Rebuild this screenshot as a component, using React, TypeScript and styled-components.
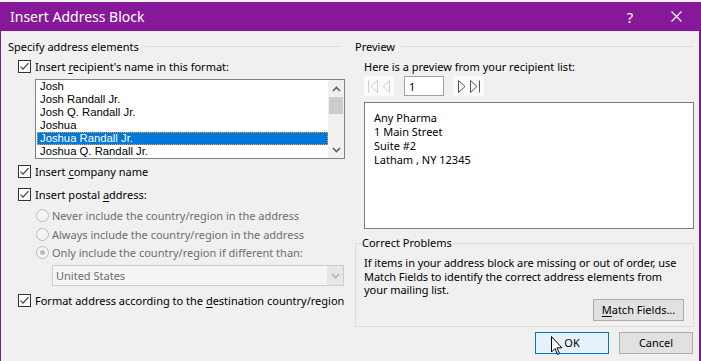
import React from "react";
import styled, { createGlobalStyle } from "styled-components";

const UI_FONT = `"Noto Sans", "Liberation Sans", sans-serif`;
const LIST_FONT = `"Liberation Sans", "Noto Sans", sans-serif`;
const PURPLE = "#87189a";

const names = [
  "Josh",
  "Josh Randall Jr.",
  "Josh Q. Randall Jr.",
  "Joshua",
  "Joshua Randall Jr.",
  "Joshua Q. Randall Jr.",
];

const address = ["Any Pharma", "1 Main Street", "Suite #2", "Latham , NY 12345"];

const GlobalStyle = createGlobalStyle`
  html, body {
    margin: 0;
    padding: 0;
    background: #f4f4f4;
  }
  body {
    font-family: ${UI_FONT};
    font-size: 11px;
    color: #000;
  }
`;

const Window = styled.div`
  position: relative;
  margin-top: 2px;
  width: 701px;
  height: 359px;
  box-sizing: border-box;
  border-left: 1px solid ${PURPLE};
  border-right: 2px solid ${PURPLE};
  background: #f0f0f0;
  display: flex;
  flex-direction: column;
  overflow: hidden;
`;

const TitleBar = styled.div`
  height: 29px;
  flex-shrink: 0;
  background: ${PURPLE};
  color: #fff;
  display: flex;
  align-items: center;
  padding-left: 9px;
  font-size: 14px;
`;

const Title = styled.div`
  flex: 1;
`;

const TitleButton = styled.div<{ $w: number }>`
  width: ${(p) => p.$w}px;
  height: 29px;
  display: flex;
  align-items: center;
  justify-content: center;
  font-size: 15px;
`;

const Body = styled.div`
  display: grid;
  grid-template-columns: 337px 339px;
  column-gap: 10px;
  padding: 7px 0 0 7px;
`;

const Column = styled.div`
  display: flex;
  flex-direction: column;
`;

const Heading = styled.div<{ $lineEnd?: number }>`
  height: 16px;
  display: flex;
  align-items: center;
  gap: 6px;
  margin-right: ${(p) => p.$lineEnd ?? 0}px;
  &::after {
    content: "";
    flex: 1;
    height: 1px;
    background: #dcdcdc;
  }
`;

const CheckRow = styled.div<{ $top: number }>`
  height: 16px;
  margin-top: ${(p) => p.$top}px;
  padding-left: 10px;
  display: flex;
  align-items: center;
  gap: 4px;
  white-space: nowrap;
`;

const Key = styled.span`
  text-decoration: underline;
  text-underline-offset: 2px;
`;

const ListBox = styled.div`
  margin: 5px 0 0 27px;
  width: 310px;
  height: 80px;
  box-sizing: border-box;
  border: 1px solid #828282;
  background: #fff;
  display: flex;
  overflow: hidden;
`;

const Items = styled.div`
  flex: 1;
  overflow: hidden;
  font-family: ${LIST_FONT};
  font-size: 11.3px;
`;

const Item = styled.div<{ $selected?: boolean }>`
  height: 13px;
  line-height: 13px;
  margin-left: 1px;
  padding-left: 3px;
  white-space: nowrap;
  background: ${(p) => (p.$selected ? "#0078d7" : "transparent")};
  color: ${(p) => (p.$selected ? "#fff" : "#000")};
  outline: ${(p) => (p.$selected ? "1px dotted #f0a050" : "none")};
  outline-offset: -1px;
`;

const ScrollBar = styled.div`
  width: 16px;
  background: #f0f0f0;
  display: flex;
  flex-direction: column;
`;

const ScrollArrow = styled.div`
  height: 17px;
  display: flex;
  align-items: center;
  justify-content: center;
`;

const Thumb = styled.div`
  height: 17px;
  margin: 0 1px;
  background: #cdcdcd;
`;

const ScrollTrack = styled.div`
  flex: 1;
`;

const RadioRow = styled.div<{ $top: number }>`
  height: 16px;
  margin-top: ${(p) => p.$top}px;
  padding-left: 28px;
  display: flex;
  align-items: center;
  gap: 3px;
  color: #6d6d6d;
  white-space: nowrap;
`;

const RadioCircle = styled.span<{ $on?: boolean }>`
  width: 13px;
  height: 13px;
  box-sizing: border-box;
  border-radius: 50%;
  border: 1px solid #bcbcbc;
  background: #f4f4f4;
  display: flex;
  align-items: center;
  justify-content: center;
  &::after {
    content: "";
    width: 5px;
    height: 5px;
    border-radius: 50%;
    background: ${(p) => (p.$on ? "#bcbcbc" : "transparent")};
  }
`;

const Select = styled.div`
  margin: 5px 0 0 44px;
  width: 292px;
  height: 21px;
  box-sizing: border-box;
  border: 1px solid #cccccc;
  background: #f5f5f5;
  display: flex;
  align-items: center;
  color: #6d6d6d;
`;

const SelectText = styled.div`
  flex: 1;
  padding-left: 3px;
`;

const SelectArrow = styled.div`
  width: 16px;
  height: 100%;
  background: #e6e6e6;
  display: flex;
  align-items: center;
  justify-content: center;
`;

const Hint = styled.div`
  height: 16px;
  margin-top: 4px;
  padding-left: 9px;
  display: flex;
  align-items: center;
`;

const NavRow = styled.div`
  margin-top: 2px;
  padding-left: 9px;
  height: 20px;
  display: flex;
`;

const NavButtons = styled.div<{ $w: number; $gap: number }>`
  width: ${(p) => p.$w}px;
  margin-left: ${(p) => p.$gap}px;
  height: 20px;
  background: #fbfbfb;
  display: flex;
  align-items: center;
  justify-content: center;
  gap: 4px;
`;

const RecordInput = styled.div`
  width: 40px;
  height: 20px;
  margin-left: 10px;
  box-sizing: border-box;
  border: 1px solid #a0a0a0;
  background: #fff;
  padding-left: 4px;
  display: flex;
  align-items: center;
`;

const PreviewBox = styled.div`
  margin: 6px 0 0 9px;
  height: 127px;
  box-sizing: border-box;
  border: 1px solid #7a7a7a;
  background: #fff;
  padding: 8px 9px;
  line-height: 14px;
`;

const Group = styled.fieldset`
  margin: 6px 0 0 0;
  padding: 5px 9px 5px 8px;
  min-width: 0;
  border: 1px solid #dcdcdc;
  display: flex;
  flex-direction: column;
`;

const Legend = styled.legend`
  padding: 0 1px;
  margin-left: -3px;
  height: 16px;
  line-height: 16px;
`;

const GroupText = styled.div`
  line-height: 13.5px;
  margin-right: -3px;
  letter-spacing: -0.05px;
`;

const Button = styled.div<{ $w: number; $primary?: boolean }>`
  width: ${(p) => p.$w}px;
  height: 22px;
  box-sizing: border-box;
  border: 1px solid ${(p) => (p.$primary ? "#0078d7" : "#adadad")};
  background: ${(p) => (p.$primary ? "#e5f1fb" : "#e1e1e1")};
  display: flex;
  align-items: center;
  justify-content: center;
  white-space: nowrap;
`;

const GroupActions = styled.div`
  margin-top: 2px;
  display: flex;
  justify-content: flex-end;
`;

const DialogActions = styled.div`
  position: relative;
  margin-top: 5px;
  padding-right: 1px;
  display: flex;
  justify-content: flex-end;
  gap: 10px;
`;

const Pointer = styled.svg`
  position: absolute;
  left: 196px;
  top: 4px;
`;

const CheckBox: React.FC = () => (
  <svg width="13" height="13" viewBox="0 0 13 13">
    <rect x="0.5" y="0.5" width="12" height="12" fill="#fff" stroke="#333" />
    <path d="M2.5 6.5 L5 9.2 L10.5 3.2" fill="none" stroke="#333" strokeWidth="1.1" />
  </svg>
);

const Chevron: React.FC<{ up?: boolean; color?: string }> = ({ up, color = "#606060" }) => (
  <svg width="9" height="6" viewBox="0 0 9 6">
    <path
      d={up ? "M1 5 L4.5 1.5 L8 5" : "M1 1 L4.5 4.5 L8 1"}
      fill="none"
      stroke={color}
      strokeWidth="1.6"
    />
  </svg>
);

const NavIcon: React.FC<{ dir: "left" | "right"; bar?: boolean; color: string }> = ({
  dir,
  bar,
  color,
}) => (
  <svg width={bar ? 10 : 8} height="13" viewBox={bar ? "0 0 10 13" : "0 0 8 13"}>
    {dir === "left" ? (
      <>
        {bar && <path d="M0.5 0.5 V12.5" stroke={color} />}
        <path
          d={bar ? "M9.5 0.5 L3 6.5 L9.5 12.5 Z" : "M7.5 0.5 L1 6.5 L7.5 12.5 Z"}
          fill="none"
          stroke={color}
        />
      </>
    ) : (
      <>
        <path d="M0.5 0.5 L7 6.5 L0.5 12.5 Z" fill="none" stroke={color} />
        {bar && <path d="M9.5 0.5 V12.5" stroke={color} />}
      </>
    )}
  </svg>
);

const App: React.FC = () => {
  return (
    <>
      <GlobalStyle />
      <Window>
        <TitleBar>
          <Title>Insert Address Block</Title>
          <TitleButton $w={46}>?</TitleButton>
          <TitleButton $w={46}>
            <svg width="11" height="11" viewBox="0 0 11 11">
              <path d="M0.5 0.5 L10.5 10.5 M10.5 0.5 L0.5 10.5" stroke="#fff" strokeWidth="1.2" />
            </svg>
          </TitleButton>
        </TitleBar>

        <Body>
          <Column>
            <Heading $lineEnd={4}>Specify address elements</Heading>
            <CheckRow $top={4}>
              <CheckBox />
              <span>
                Insert <Key>r</Key>ecipient's name in this format:
              </span>
            </CheckRow>
            <ListBox>
              <Items>
                {names.map((n, i) => (
                  <Item key={n} $selected={i === 4}>
                    {n}
                  </Item>
                ))}
              </Items>
              <ScrollBar>
                <ScrollArrow>
                  <Chevron up />
                </ScrollArrow>
                <Thumb />
                <ScrollTrack />
                <ScrollArrow>
                  <Chevron />
                </ScrollArrow>
              </ScrollBar>
            </ListBox>
            <CheckRow $top={4}>
              <CheckBox />
              <span>
                Insert <Key>c</Key>ompany name
              </span>
            </CheckRow>
            <CheckRow $top={7}>
              <CheckBox />
              <span>
                Insert postal <Key>a</Key>ddress:
              </span>
            </CheckRow>
            <RadioRow $top={5}>
              <RadioCircle />
              Never include the country/region in the address
            </RadioRow>
            <RadioRow $top={3}>
              <RadioCircle />
              Always include the country/region in the address
            </RadioRow>
            <RadioRow $top={2}>
              <RadioCircle $on />
              Only include the country/region if different than:
            </RadioRow>
            <Select>
              <SelectText>United States</SelectText>
              <SelectArrow>
                <Chevron color="#b0b0b0" />
              </SelectArrow>
            </Select>
            <CheckRow $top={6}>
              <CheckBox />
              <span>
                Format address according to the <Key>d</Key>estination country/region
              </span>
            </CheckRow>
          </Column>

          <Column>
            <Heading>Preview</Heading>
            <Hint>Here is a preview from your recipient list:</Hint>
            <NavRow>
              <NavButtons $w={30} $gap={0}>
                <NavIcon dir="left" bar color="#cfcfcf" />
                <NavIcon dir="left" color="#cfcfcf" />
              </NavButtons>
              <RecordInput>1</RecordInput>
              <NavButtons $w={31} $gap={9}>
                <NavIcon dir="right" color="#555" />
                <NavIcon dir="right" bar color="#555" />
              </NavButtons>
            </NavRow>
            <PreviewBox>
              {address.map((line) => (
                <div key={line}>{line}</div>
              ))}
            </PreviewBox>
            <Group>
              <Legend>Correct Problems</Legend>
              <GroupText>
                If items in your address block are missing or out of order, use Match Fields to
                identify the correct address elements from your mailing list.
              </GroupText>
              <GroupActions>
                <Button $w={91}>
                  <span>
                    <Key>M</Key>atch Fields...
                  </span>
                </Button>
              </GroupActions>
            </Group>
            <DialogActions>
              <Button $w={74} $primary>
                OK
              </Button>
              <Button $w={74}>Cancel</Button>
              <Pointer width="12" height="20" viewBox="0 0 12 20">
                <path
                  d="M0.5 0.5 L0.5 16 L4 12.5 L6.5 18.5 L8.5 17.6 L6 11.8 L10.8 11.8 Z"
                  fill="#fff"
                  stroke="#000"
                />
              </Pointer>
            </DialogActions>
          </Column>
        </Body>
      </Window>
    </>
  );
};

export default App;
